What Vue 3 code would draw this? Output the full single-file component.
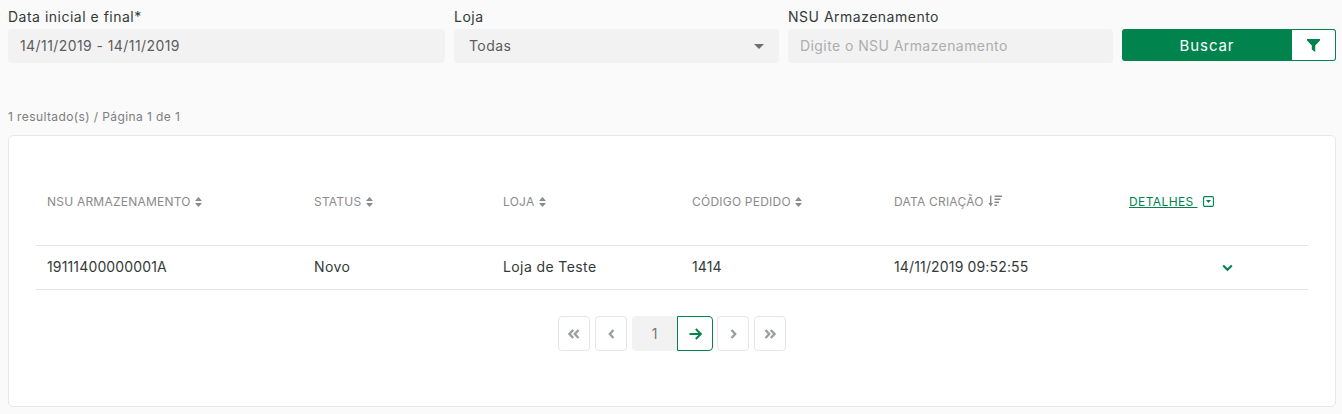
<script setup>
const cols = [
  { label: 'NSU ARMAZENAMENTO', value: '19111400000001A', icon: 'sort', tight: true },
  { label: 'STATUS', value: 'Novo', icon: 'sort', tight: false },
  { label: 'LOJA', value: 'Loja de Teste', icon: 'sort', tight: false },
  { label: 'CÓDIGO PEDIDO', value: '1414', icon: 'sort', tight: true },
  { label: 'DATA CRIAÇÃO', value: '14/11/2019 09:52:55', icon: 'desc', tight: true },
]
</script>

<template>
  <div class="page">
    <form class="filters" @submit.prevent>
      <label class="field date">
        <span class="label">Data inicial e final*</span>
        <input class="input" value="14/11/2019 - 14/11/2019" />
      </label>
      <div class="field store">
        <span class="label">Loja</span>
        <div class="select"><span>Todas</span><i class="caret"></i></div>
      </div>
      <label class="field nsu">
        <span class="label">NSU Armazenamento</span>
        <input class="input" placeholder="Digite o NSU Armazenamento" />
      </label>
      <div class="actions">
        <button class="search">Buscar</button>
        <button class="filter" aria-label="Filtro">
          <svg width="13" height="13" viewBox="0 0 13 13"><path d="M0 0h13v1.500L8.200 6.500V13L4.800 10.500v-4L0 1.500z" fill="#00834d"/></svg>
        </button>
      </div>
    </form>

    <p class="count">1 resultado(s) / Página 1 de 1</p>

    <section class="card">
      <div class="row head">
        <div v-for="c in cols" :key="c.label" class="cell">
          {{ c.label }}
          <svg v-if="c.icon === 'sort'" class="sort" width="7" height="10" viewBox="0 0 7 10"><path d="M3.500 0 7 4H0zM0 6h7L3.500 10z" fill="#8a8a8a"/></svg>
          <svg v-else class="sort" width="14" height="12" viewBox="0 0 14 11"><path d="M2 0h1.400v7.500H5L2.700 11 .4 7.500H2zM6.500 0H14v1.600H6.500zM6.500 3H12.500v1.600H6.500zM6.500 6H11v1.600H6.500zM6.500 9H9v1.600H6.500z" fill="#8a8a8a"/></svg>
        </div>
        <div class="cell details">
          <a class="details-link">DETALHES&nbsp;</a>
          <svg width="11" height="11" viewBox="0 0 11 11"><rect x=".6" y=".6" width="9.800" height="9.800" rx="1.200" fill="none" stroke="#00834d" stroke-width="1.100"/><path d="M3 4h5L5.500 7z" fill="#00834d"/></svg>
        </div>
      </div>
      <div class="row body">
        <div v-for="c in cols" :key="c.label" class="cell" :class="{ tight: c.tight }">{{ c.value }}</div>
        <div class="cell expand">
          <svg width="11" height="8" viewBox="0 0 11 8"><path d="M1.200 1.500 5.500 5.800 9.800 1.500" fill="none" stroke="#00834d" stroke-width="2"/></svg>
        </div>
      </div>

      <nav class="pager">
        <button class="pg"><svg width="12" height="10" viewBox="0 0 12 10"><path d="M5.200 1 1.500 5l3.700 4M10.500 1 6.800 5l3.700 4" fill="none" stroke="#9a9fa3" stroke-width="2.400"/></svg></button>
        <button class="pg"><svg width="7" height="10" viewBox="0 0 7 10"><path d="M5.500 1 1.800 5l3.700 4" fill="none" stroke="#9a9fa3" stroke-width="2.400"/></svg></button>
        <div class="group">
          <span class="current">1</span>
          <button class="next"><svg width="13" height="12" viewBox="0 0 13 12"><path d="M.5 6h10.500M6.800 1l5 5-5 5" fill="none" stroke="#00834d" stroke-width="2"/></svg></button>
        </div>
        <button class="pg"><svg width="7" height="10" viewBox="0 0 7 10"><path d="M1.500 1l3.700 4-3.700 4" fill="none" stroke="#9a9fa3" stroke-width="2.400"/></svg></button>
        <button class="pg"><svg width="12" height="10" viewBox="0 0 12 10"><path d="M1.500 1l3.700 4-3.700 4M6.800 1l3.700 4-3.700 4" fill="none" stroke="#9a9fa3" stroke-width="2.400"/></svg></button>
      </nav>
    </section>
  </div>
</template>

<style>
html, body { margin: 0; background: #fafafa; }
</style>

<style scoped>
.page {
  width: 1342px;
  height: 414px;
  box-sizing: border-box;
  padding: 8px 6px 6px 8px;
  background: #fafafa;
  font-family: Inter, "Noto Sans", sans-serif;
  font-size: 14px;
  color: #333a38;
  overflow: hidden;
}
.filters { display: flex; gap: 9px; align-items: flex-start; }
.field { display: flex; flex-direction: column; }
.date { width: 437px; }
.store, .nsu { width: 325px; }
.label { font-size: 14px; line-height: 17px; height: 21px; letter-spacing: .5px; color: #333a38; }
.input, .select {
  box-sizing: border-box;
  width: 100%;
  height: 34px;
  border: 0;
  border-radius: 4px;
  background: #f2f2f2;
  font: inherit;
  letter-spacing: .42px;
  color: #5c5c5c;
  outline: none;
}
.input { padding: 0 12px 2px; }
.input::placeholder { color: #adadad; opacity: 1; }
.select { display: flex; align-items: center; justify-content: space-between; padding: 0 15px 2px; }
.caret { margin-top: 2px; border: 5px solid transparent; border-top: 5.500px solid #6f6f6f; border-bottom: 0; }
.actions { display: flex; width: 214px; height: 32px; margin-top: 21px; }
.search {
  flex: 1;
  border: 0;
  border-radius: 3px 0 0 3px;
  background: #00834d;
  color: #fff;
  font: inherit;
  font-size: 15px;
  letter-spacing: .9px;
}
.filter {
  width: 44px;
  padding: 0;
  border: 1px solid #00834d;
  border-left: 0;
  border-radius: 0 3px 3px 0;
  background: #fff;
  display: flex;
  align-items: center;
  justify-content: center;
}
.count { margin: 46px 0 0; height: 26px; line-height: 16px; font-size: 12px; letter-spacing: .4px; color: #7d7d7d; }
.card {
  box-sizing: border-box;
  height: 272px;
  padding: 0 27px;
  border: 1px solid #e8e8e8;
  border-radius: 5px;
  background: #fff;
}
.row {
  display: grid;
  grid-template-columns: 267px 189px 189px 202px 235px 1fr;
  align-items: center;
  border-bottom: 1px solid #e4e4e4;
}
.head { box-sizing: border-box; height: 110px; padding-top: 22px; font-size: 12px; letter-spacing: .22px; color: #8a8a8a; }
.body { box-sizing: border-box; height: 44px; padding-bottom: 2px; font-size: 14px; letter-spacing: .4px; }
.tight { letter-spacing: .15px; }
.cell { padding-left: 11px; white-space: nowrap; }
.sort { margin-left: 1px; vertical-align: -1px; }
.details { display: flex; align-items: center; gap: 6px; }
.details-link { color: #00834d; text-decoration: underline; letter-spacing: .4px; }
.expand { padding-left: 104px; padding-top: 2px; display: flex; }
.pager { display: flex; justify-content: center; align-items: flex-start; gap: 5px; margin-top: 26px; }
.pg, .next, .current { box-sizing: border-box; height: 35px; display: flex; align-items: center; justify-content: center; padding: 0; }
.pg { width: 32px; border: 1px solid #e6e6e6; border-radius: 4px; background: #fff; }
.group { display: flex; margin-right: -1px; }
.current { width: 45px; background: #f2f2f2; border-radius: 4px 0 0 4px; color: #777; }
.next { width: 36px; border: 1px solid #00834d; border-radius: 0 4px 4px 0; background: #fff; }
</style>
